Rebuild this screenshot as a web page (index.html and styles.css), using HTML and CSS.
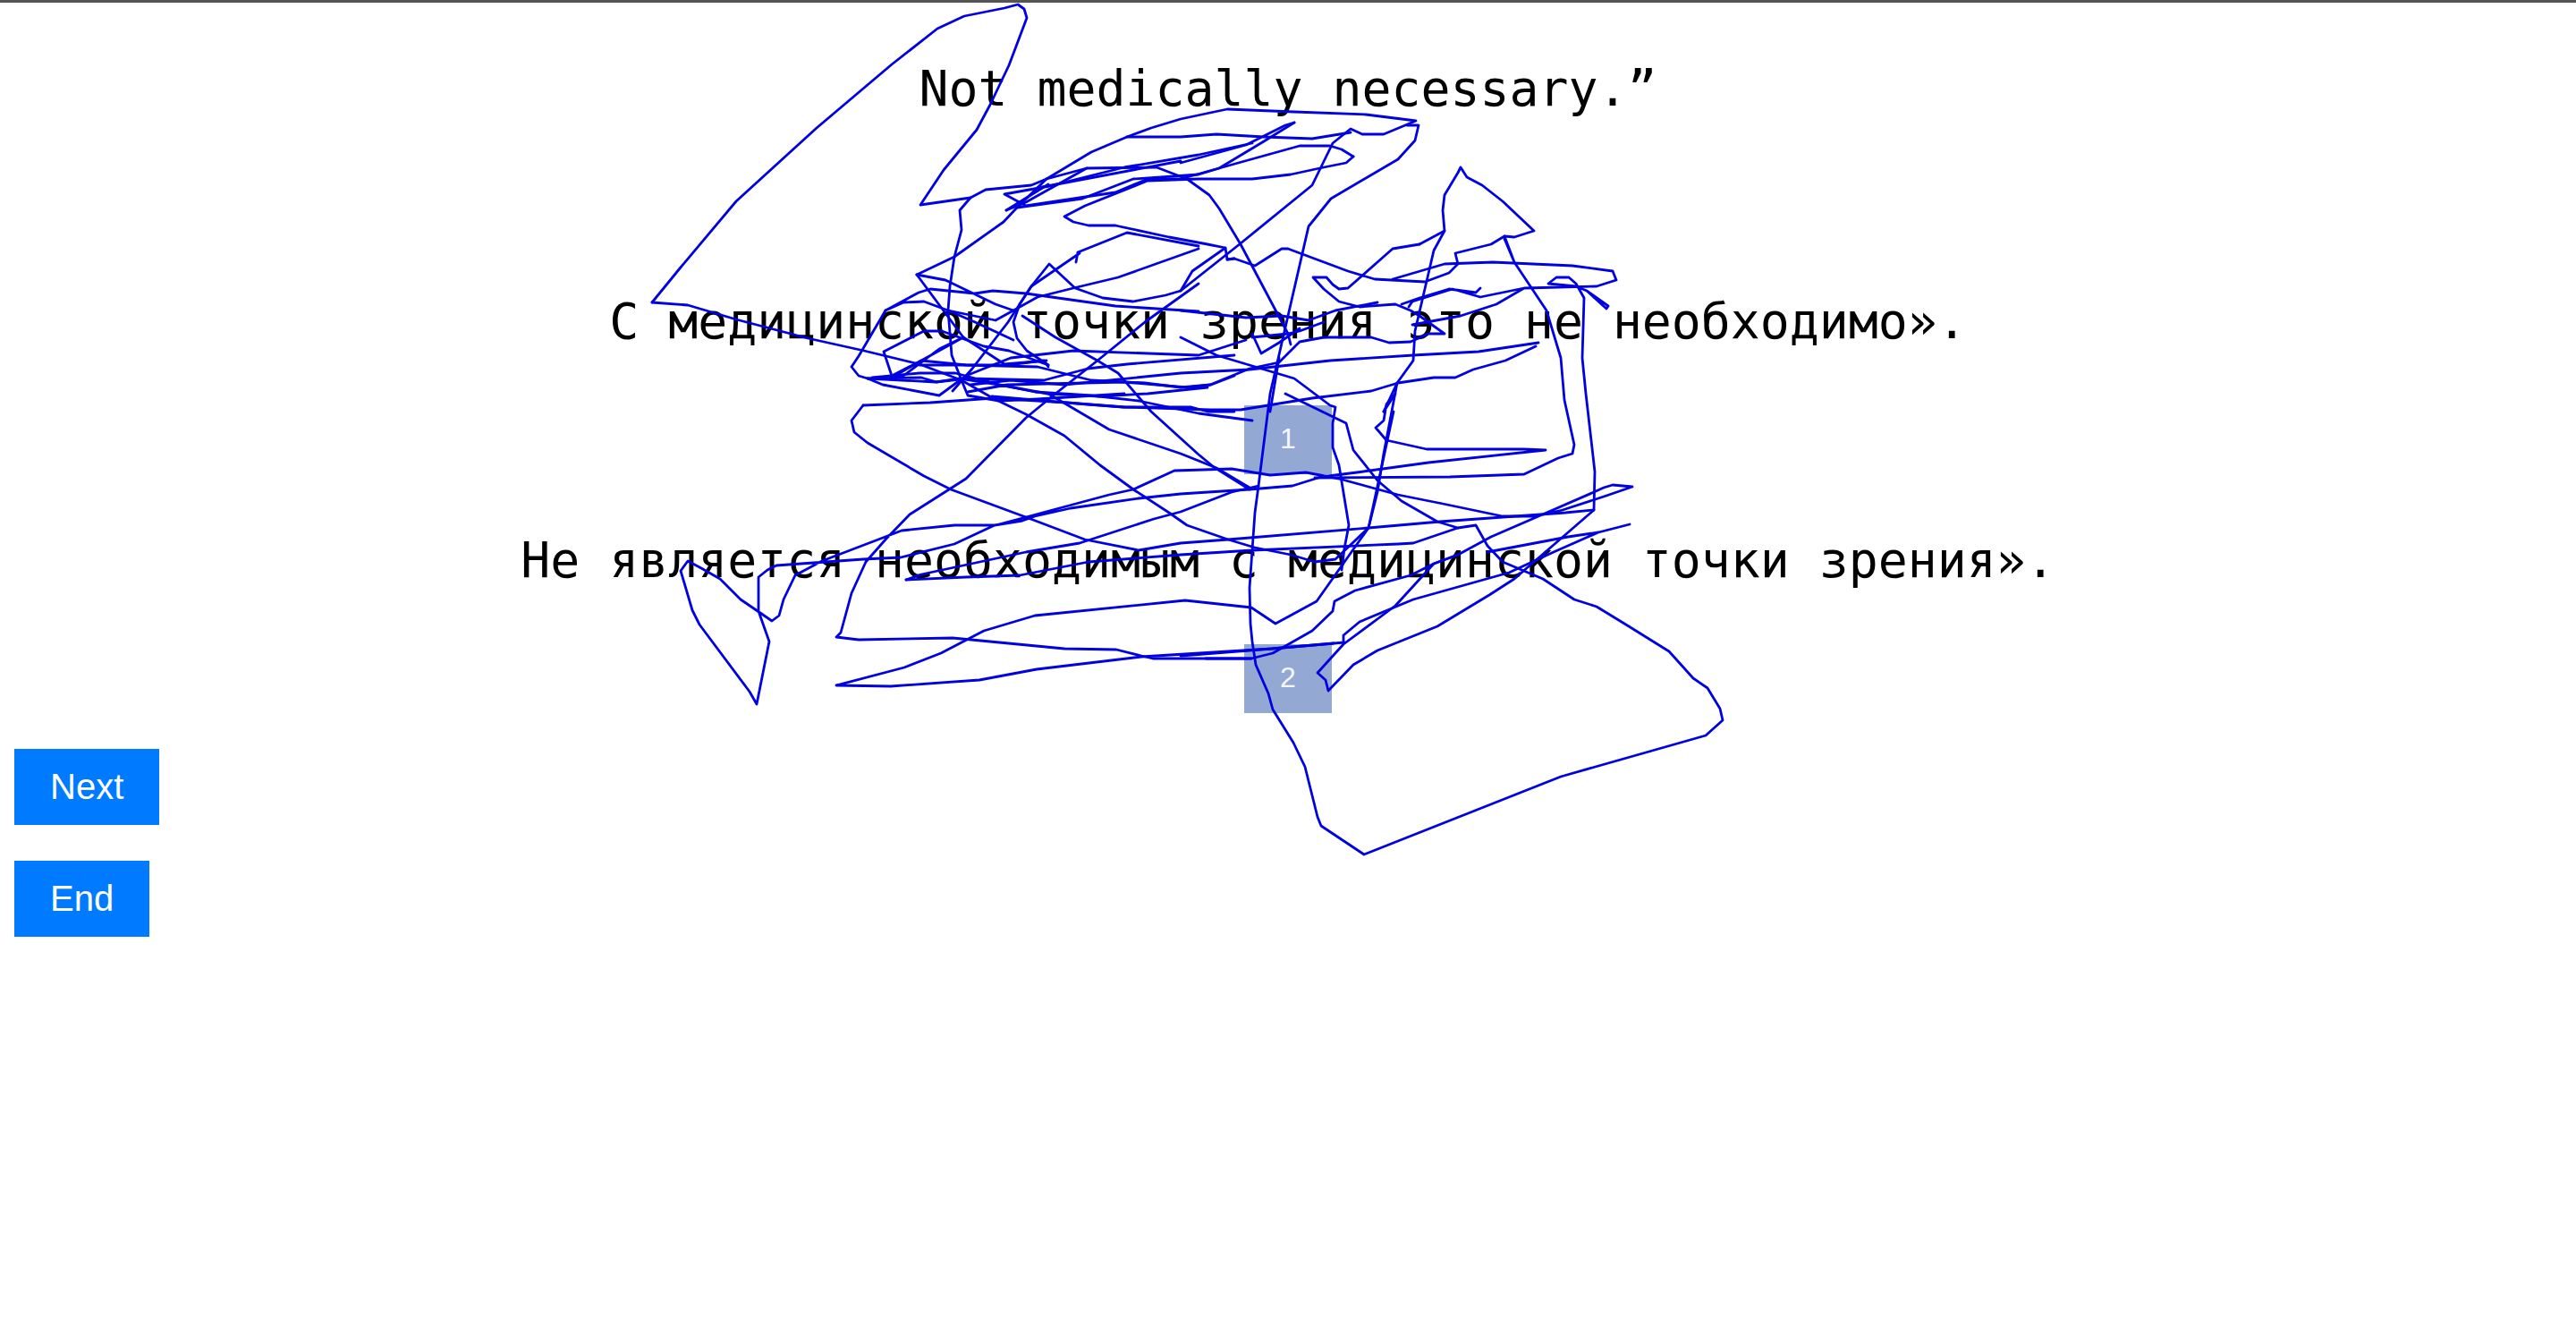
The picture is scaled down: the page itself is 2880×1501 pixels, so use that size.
FILE: index.html
```html
<!DOCTYPE html>
<html lang="en">
<head>
    <meta charset="UTF-8">
    <meta name="viewport" content="width=device-width, initial-scale=1.0">
    <title>Translation review</title>
    <link rel="stylesheet" href="styles.css">
</head>
<body>

    <div class="source">Not medically necessary.”</div>

    <div class="option">
        <div class="option-text">С медицинской точки зрения это не необходимо».</div>
        <div class="option-num">1</div>
    </div>

    <div class="option">
        <div class="option-text">Не является необходимым с медицинской точки зрения».</div>
        <div class="option-num">2</div>
    </div>

    <div class="actions">
        <button class="action-btn">Next</button>
        <button class="action-btn">End</button>
    </div>

    <!-- pen scribble drawn over the page -->
    <svg class="scribble" width="2880" height="1501" viewBox="0 0 2880 1501">
        <path d="M729 338 L760 300 L823 225 L913 143 L997 72 L1048 32 L1078 18 L1123 9 L1138 5 L1145 10 L1148 20 L1128 73 L1107 117 L1092 145 L1055 190 L1029 229 L1085 221 L1102 212 L1153 207 L1170 200"/>
        <path d="M729 338 L769 341 L823 357 L903 378 L966 392 L1028 407 L1075 425 L1110 445 L1147 463 L1190 487 L1230 520 L1267 547 L1307 573 L1327 587 L1373 603 L1403 612 L1443 620 L1470 628 L1493 625 L1530 590 L1540 550 L1547 507 L1562 428 L1580 403 L1582 370 L1603 280 L1615 258 L1613 235 L1615 218 L1630 193 L1633 187 L1640 198 L1657 207 L1680 225 L1715 258 L1693 265 L1682 264 L1667 273 L1627 283 L1630 295 L1620 305 L1593 315 L1537 312 L1507 303 L1440 278 L1433 278 L1403 297 L1380 289 L1372 290"/>
        <path d="M1085 221 L1073 235 L1075 257 L1067 287 L1062 320 L1060 347 L1064 397 L1075 425 L1082 442 L1117 448 L1160 446 L1257 440"/>
        <path d="M1025 307 L1067 287 L1122 248 L1137 232 L1170 200 L1220 170 L1260 153 L1287 143 L1320 133 L1372 122 L1447 125 L1527 128 L1583 135 L1547 150 L1523 150 L1510 144 L1490 160 L1467 207 L1387 272 L1320 325 L1303 330 L1267 337 L1233 333 L1202 322 L1173 295 L1153 320 L1140 340 L1133 360 L1137 378 L1148 392 L1172 408"/>
        <path d="M1370 277 L1333 303 L1320 325 M1340 317 L1280 360 L1227 403 L1180 440 L1147 467 L1080 535 L1017 575 L990 603 L968 628 L952 663 L940 707 L935 712 L960 715 L1065 713 L1190 725 L1248 726 L1276 733 L1289 736 L1399 736 L1423 730 L1467 705 L1490 683 L1492 672 L1515 660 L1577 643 L1603 630 L1630 620 L1667 600 L1720 577 L1782 550 L1793 545 L1803 542 L1825 544 L1793 555 L1747 570 L1717 577 L1680 577 L1613 563 L1563 553 L1497 535 L1460 528 L1420 531 L1377 524 L1313 526 L1267 547 L1240 553 L1147 578 L1113 587 L1067 587 L1008 593 L919 627 L889 643 L876 670 L871 688 L863 694 L850 685 L828 670 L805 647 L784 635 L769 627 L761 638 L774 682 L782 698 L838 773 L846 787 L860 717 L848 683 L848 645 L858 637 L868 632 L965 625 L1007 623 L1067 608 L1112 587 L1143 582 L1157 577 L1197 568 L1273 557 L1320 552 L1397 547 L1445 543 L1477 533 L1517 528 L1597 517 L1728 503 L1703 502 L1595 502 L1550 492 L1538 478 L1547 470 L1550 452 L1560 440 L1547 460"/>
        <path d="M1587 273 L1557 278 L1507 322 L1497 323 L1490 318 L1483 310 L1468 310 L1480 323 L1497 337 L1520 343 L1560 340 L1577 347 L1587 353 L1615 373 L1597 373 L1577 382 L1553 383 L1533 377 L1480 377 L1453 382 L1430 405 L1397 412 L1353 430 L1320 433 L1280 428 L1220 425 L1160 410 L1080 408 L1030 403 L997 420"/>
        <path d="M1615 258 L1587 273"/>
        <path d="M1513 175 L1500 167 L1487 163 L1453 163 L1363 188 L1320 200 L1283 200 L1247 215 L1147 230 L1123 217 L1173 208 L1257 187 L1340 173 L1400 160"/>
        <path d="M1513 175 L1505 182 L1480 187 L1443 195 L1400 200 L1340 200 L1283 202 L1213 230 L1190 242 L1200 248 L1217 252 L1247 252 L1307 265 L1350 273 L1370 277 L1372 290 L1380 289"/>
        <path d="M1447 137 L1413 158 L1363 188 L1340 195 L1267 200 L1210 222 L1137 232 M1125 235 L1147 226 L1215 188 L1293 187 L1327 200 L1352 218 L1363 233 L1387 273 L1440 373"/>
        <path d="M1320 153 L1360 150 L1413 153 L1467 155 L1510 148 M1320 182 L1393 162 L1437 140 L1447 137 M1170 200 L1215 188 M1260 153 L1320 153 M1160 210 L1320 180 M1125 235 L1172 206"/>
        <path d="M1340 278 L1250 310 L1200 322 L1160 332 L1133 347 L1113 358 L1060 347 M1205 282 L1260 260 L1340 275 M1205 282 L1203 293 M1065 437 L1087 412 L1127 360 L1153 320 L1207 283"/>
        <path d="M1025 307 L1057 313 L1113 340 L1133 347 M990 347 L1027 327 L1040 323 L1090 328 L1110 325 L1147 328 L1247 342 L1340 348 M990 347 L1010 338 L1033 337 L1060 347 L1090 360 L1133 380"/>
        <path d="M1025 307 L1077 377 L1123 407 L1170 403 M952 410 L960 398 L990 347 M952 410 L960 420 L970 423 L987 430 L1050 442 L1080 420 L1130 400 L1200 392 L1340 397 L1393 380"/>
        <path d="M988 393 L997 420 L1010 420 L1050 390 L1077 377 M988 393 L1033 370 L1053 370 L1100 387 L1128 392 L1172 408 M997 422 L1030 403 L1077 377"/>
        <path d="M970 423 L1030 422 L1047 427 L1073 423 L1117 430 L1157 438 L1220 442 L1273 448 L1340 462 L1400 470"/>
        <path d="M970 423 L1046 427 L1082 423 L1167 425 L1216 412 L1260 407 L1380 397 M975 422 L1028 417 L1068 417 L1117 430 L1171 440 L1229 443 L1283 440 L1350 433 M1028 408 L1126 408 L1167 403 L1172 410 M1082 438 L1126 430 L1256 427 L1327 433 L1354 430 L1380 420 M1109 443 L1216 452 L1256 455 L1332 455 L1350 460 L1380 460"/>
        <path d="M1143 353 L1180 377 L1227 403 L1250 417 L1287 460 L1340 508 L1357 522 L1397 547"/>
        <path d="M1172 440 L1240 480 L1320 507 L1360 523 L1397 545"/>
        <path d="M965 453 L952 470 L955 483 L970 495 L1033 532 L1063 547 L1147 578 L1213 603 L1273 615 L1320 607 L1373 603 L1530 590 L1610 583 L1750 573 L1782 570"/>
        <path d="M965 453 L1040 450 L1110 445 L1193 450 L1257 455 L1353 458 L1387 458 L1467 445 L1533 437 L1563 428 L1603 422 L1627 422 L1647 413 L1683 403 L1717 387"/>
        <path d="M1013 648 L1080 645 L1140 643 L1217 628 L1320 620 L1400 615 L1563 608 L1580 607 L1630 590 L1650 587 L1663 610 L1680 628 L1725 647 L1760 670 L1785 678 L1821 700 L1866 728 L1893 758 L1909 769 L1923 792 L1926 805 L1907 822 L1745 868 L1525 955 L1477 923 L1473 913 L1459 857 L1446 830 L1423 793 L1418 775 L1404 743 L1400 717 L1398 697 L1397 657 L1403 573 L1407 543 L1420 440 L1463 253 L1488 222 L1563 178 L1582 157 L1586 140 L1573 140"/>
        <path d="M1013 648 L1030 642 L1147 617 L1207 607 L1290 580 L1320 572 L1377 550 L1407 543"/>
        <path d="M1773 440 L1769 400 L1771 333 L1762 317 L1754 310 L1740 310 L1731 317 L1762 320 L1774 325 L1798 342 L1796 345 L1774 325 M1773 440 L1783 527 L1782 570 L1693 647 L1665 665 L1607 700 L1540 727 L1513 743 L1485 772 L1482 760 L1473 752 L1502 720 L1560 677 L1603 630 L1630 620"/>
        <path d="M1502 718 L1502 710 L1520 695 L1580 670 L1687 640 L1737 617 L1787 595 L1822 586 M1663 617 L1753 600 L1787 595 M1503 718 L1422 725 L1320 733 M1348 736 L1399 736"/>
        <path d="M1682 267 L1693 293 L1729 347 L1745 400 L1749 447 L1760 497 L1758 507 L1742 512 L1704 530 L1621 533 L1470 534 M1682 264 L1693 293"/>
        <path d="M1807 313 L1803 303 L1758 297 L1669 293 L1615 295 L1557 312 M1807 313 L1785 320 L1704 322 L1655 332 L1624 323 L1579 337 L1575 343 M1704 322 L1673 340 L1633 353 L1579 363 M1655 322 L1650 327 L1620 323 L1587 333 L1567 340"/>
        <path d="M1720 383 L1653 393 L1580 397 L1487 403 L1397 413 L1320 417 L1190 430 L1130 425 L1085 430"/>
        <path d="M1320 347 L1393 355 L1433 353 L1463 358 L1493 347 L1540 338 M1320 377 L1360 397 L1447 423 L1487 453 L1493 455 L1490 473 L1490 500 L1497 520 L1508 587 L1503 613 L1500 637 M1437 440 L1505 473 L1513 503 L1540 537 L1567 560 L1607 583 L1630 590"/>
        <path d="M1400 373 L1410 395 L1430 383 L1453 367 M1400 377 L1440 373 L1453 370 L1480 360 M1440 373 L1443 385"/>
        <path d="M935 766 L1011 746 L1052 730 L1100 705 L1157 688 L1325 671 L1399 679 L1426 697 L1472 672 L1530 590 M935 766 L996 767 L1095 760 L1159 748 L1276 734 L1422 725 L1491 719"/>
        <path d="M1562 428 L1547 460 M1558 460 L1530 590 M1420 460 L1430 400"/>
    </svg>

</body>
</html>
```

FILE: styles.css
```css
html, body {
    margin: 0;
    padding: 0;
}
body {
    position: relative;
    height: 1498px;
    border-top: 3px solid #555;
    overflow: hidden;
    background-color: #fff;
}
.source, .option-text {
    font-family: "DejaVu Sans Mono", monospace;
    font-size: 54.8px;
    line-height: 64px;
    color: #000;
    text-align: center;
}
.source {
    margin: 64px 0 196px;
}
.option + .option {
    margin-top: 64px;
}
.option-text {
    margin-bottom: 62px;
}
.option-num {
    width: 98px;
    height: 77px;
    margin: 0 auto;
    background-color: #93a8d2;
    color: #f4f6fb;
    font-family: "Liberation Sans", Arial, sans-serif;
    font-size: 32px;
    line-height: 75px;
    text-align: center;
}
.actions {
    display: flex;
    flex-direction: column;
    align-items: flex-start;
    gap: 40px;
    margin-top: 40px;
    padding-left: 16px;
}
.action-btn {
    padding: 20px 40px;
    border: none;
    background-color: #007bff;
    color: #fff;
    font-family: "Liberation Sans", Arial, sans-serif;
    font-size: 40px;
    line-height: 45px;
}
.scribble {
    position: absolute;
    top: -3px;
    left: 0;
    pointer-events: none;
}
.scribble path {
    fill: none;
    stroke: #0000e0;
    stroke-width: 2.8;
    stroke-linejoin: round;
    stroke-linecap: round;
}
```
